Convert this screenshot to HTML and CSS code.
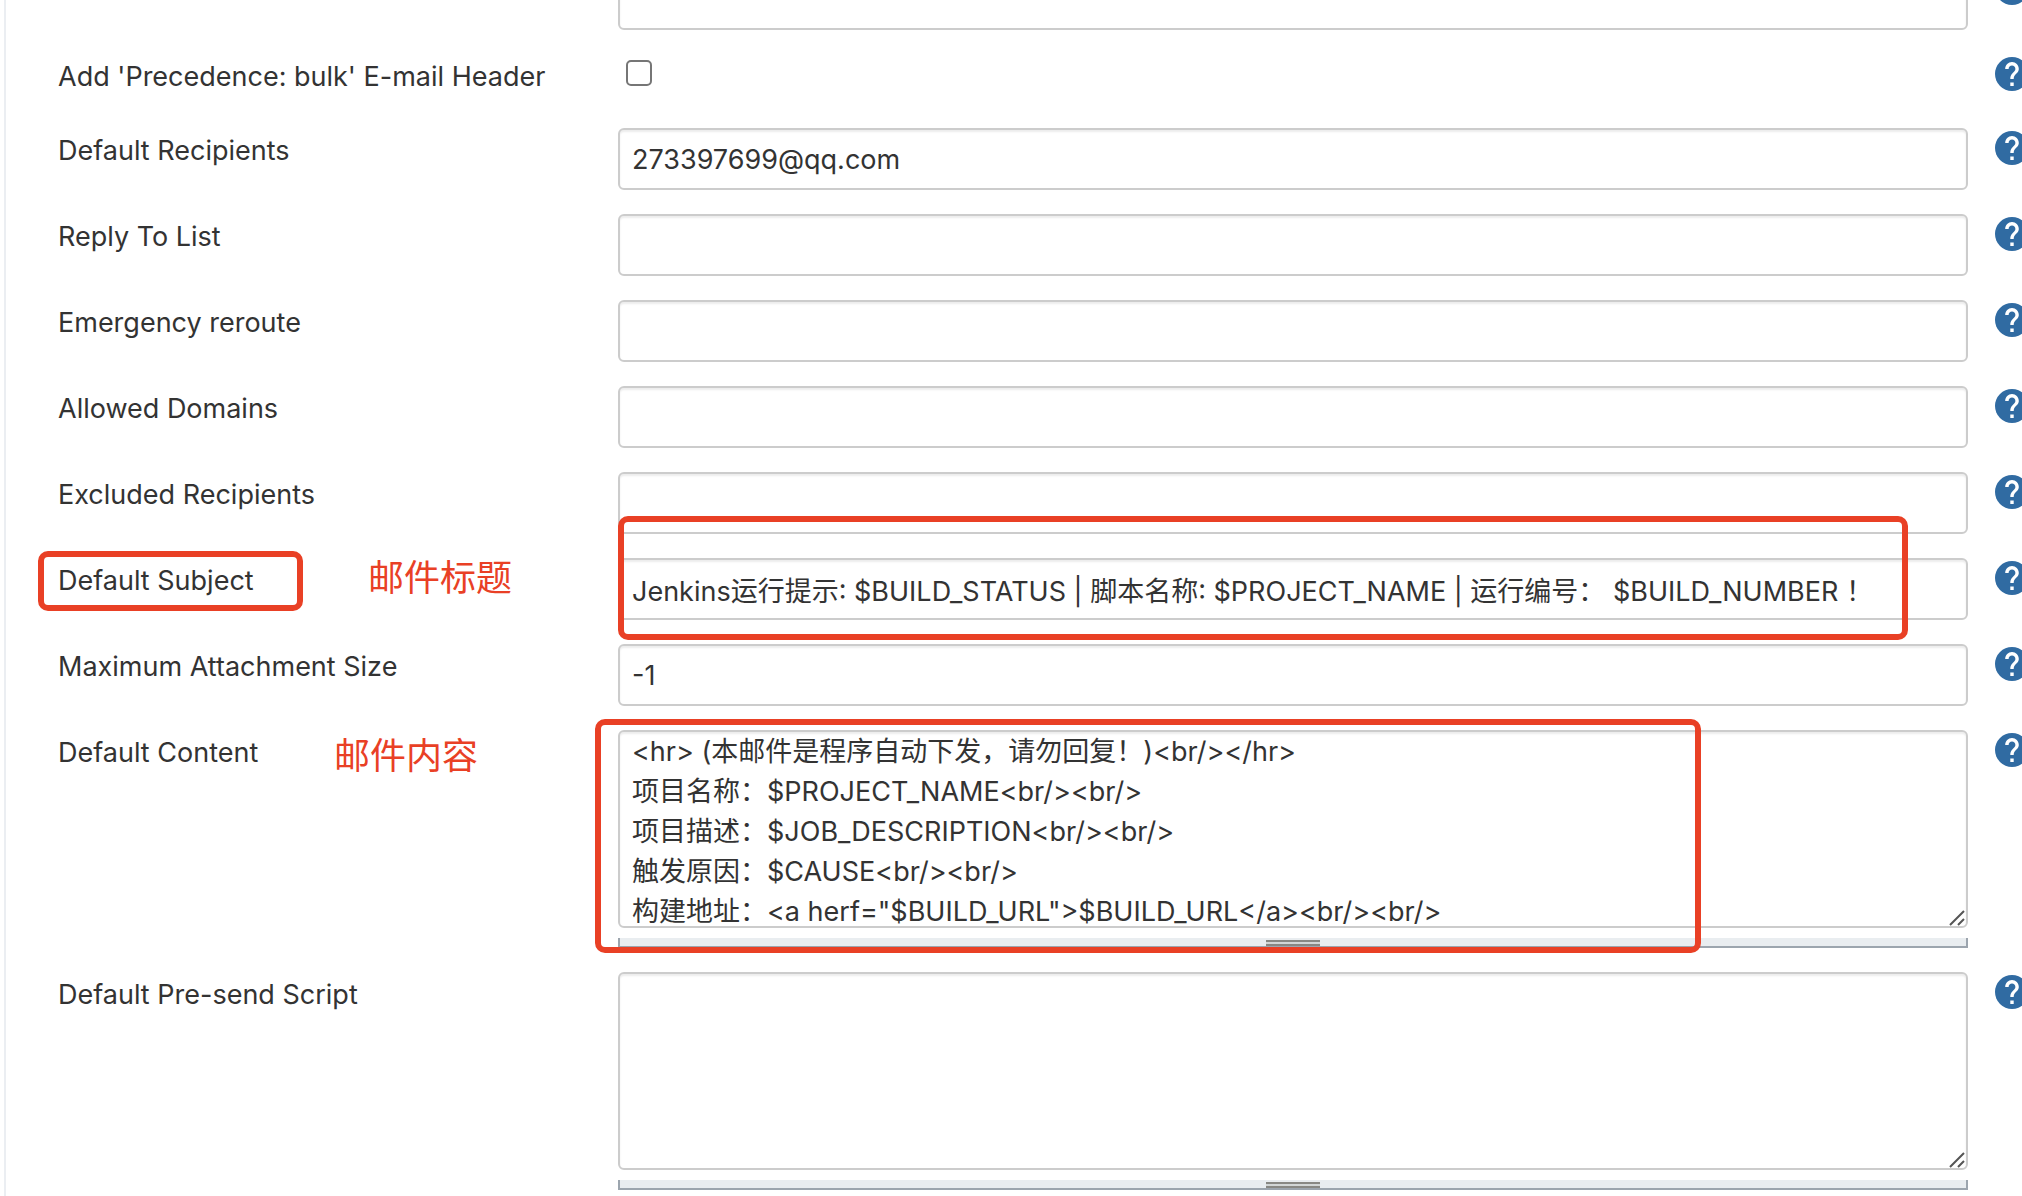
FILE: index.html
```html
<!DOCTYPE html>
<html lang="en">
<head>
<meta charset="utf-8">
<title>Extended E-mail Notification</title>
<link rel="stylesheet" href="styles.css">
</head>
<body>
<svg class="sprite" aria-hidden="true">
  <symbol id="help" viewBox="2 2 20 20"><path fill="#306ba2" d="M12 2a10 10 0 1 0 0 20 10 10 0 0 0 0-20z"/><path fill="#fff" d="M13 19h-2v-2h2v2zm2.070-7.750-.9.920C13.450 12.900 13 13.500 13 15h-2v-.5c0-1.100.45-2.100 1.170-2.830l1.240-1.260c.37-.36.59-.86.59-1.410 0-1.100-.9-2-2-2s-2 .9-2 2H8c0-2.210 1.790-4 4-4s4 1.790 4 4c0 .88-.36 1.680-.93 2.250z"/></symbol>
  <symbol id="grip" viewBox="0 0 16 16"><path d="M1 15 15 1M9 15l6-6" stroke="#555" stroke-width="2" fill="none"/></symbol>
</svg>
<form class="config">
  <div class="row">
    <div class="setting"><input class="text" type="text" aria-label="List ID"></div>
    <button class="help" type="button" aria-label="Help"><svg><use href="#help"/></svg></button>
  </div>
  <div class="row row-check">
    <label class="name" for="bulk">Add 'Precedence: bulk' E-mail Header</label>
    <div class="setting"><input class="check" id="bulk" type="checkbox"></div>
    <button class="help" type="button" aria-label="Help"><svg><use href="#help"/></svg></button>
  </div>
  <div class="row">
    <label class="name" for="recipients">Default Recipients</label>
    <div class="setting"><input class="text" id="recipients" type="text" value="273397699@qq.com"></div>
    <button class="help" type="button" aria-label="Help"><svg><use href="#help"/></svg></button>
  </div>
  <div class="row">
    <label class="name" for="reply">Reply To List</label>
    <div class="setting"><input class="text" id="reply" type="text"></div>
    <button class="help" type="button" aria-label="Help"><svg><use href="#help"/></svg></button>
  </div>
  <div class="row">
    <label class="name" for="reroute">Emergency reroute</label>
    <div class="setting"><input class="text" id="reroute" type="text"></div>
    <button class="help" type="button" aria-label="Help"><svg><use href="#help"/></svg></button>
  </div>
  <div class="row">
    <label class="name" for="domains">Allowed Domains</label>
    <div class="setting"><input class="text" id="domains" type="text"></div>
    <button class="help" type="button" aria-label="Help"><svg><use href="#help"/></svg></button>
  </div>
  <div class="row">
    <label class="name" for="excluded">Excluded Recipients</label>
    <div class="setting"><input class="text" id="excluded" type="text"></div>
    <button class="help" type="button" aria-label="Help"><svg><use href="#help"/></svg></button>
  </div>
  <div class="row">
    <label class="name" for="subject">Default Subject</label>
    <span class="mark mark-label"></span>
    <span class="note note-subject">邮件标题</span>
    <div class="setting">
      <input class="text" id="subject" type="text" value="Jenkins运行提示: $BUILD_STATUS | 脚本名称: $PROJECT_NAME | 运行编号： $BUILD_NUMBER ！">
      <span class="mark mark-subject"></span>
    </div>
    <button class="help" type="button" aria-label="Help"><svg><use href="#help"/></svg></button>
  </div>
  <div class="row">
    <label class="name" for="maxsize">Maximum Attachment Size</label>
    <div class="setting"><input class="text" id="maxsize" type="text" value="-1"></div>
    <button class="help" type="button" aria-label="Help"><svg><use href="#help"/></svg></button>
  </div>
  <div class="row">
    <label class="name" for="content">Default Content</label>
    <span class="note note-content">邮件内容</span>
    <div class="setting">
      <textarea class="text area" id="content">&lt;hr&gt; (本邮件是程序自动下发，请勿回复！)&lt;br/&gt;&lt;/hr&gt;
项目名称：$PROJECT_NAME&lt;br/&gt;&lt;br/&gt;
项目描述：$JOB_DESCRIPTION&lt;br/&gt;&lt;br/&gt;
触发原因：$CAUSE&lt;br/&gt;&lt;br/&gt;
构建地址：&lt;a herf="$BUILD_URL"&gt;$BUILD_URL&lt;/a&gt;&lt;br/&gt;&lt;br/&gt;</textarea>
      <svg class="corner"><use href="#grip"/></svg>
      <div class="handle"><span class="bars"></span></div>
      <span class="mark mark-content"></span>
    </div>
    <button class="help" type="button" aria-label="Help"><svg><use href="#help"/></svg></button>
  </div>
  <div class="row">
    <label class="name" for="presend">Default Pre-send Script</label>
    <div class="setting">
      <textarea class="text area" id="presend"></textarea>
      <svg class="corner"><use href="#grip"/></svg>
      <div class="handle"><span class="bars"></span></div>
    </div>
    <button class="help" type="button" aria-label="Help"><svg><use href="#help"/></svg></button>
  </div>
</form>
</body>
</html>
```
FILE: styles.css
```css
* { box-sizing: border-box; }
body {
  margin: 0;
  overflow: hidden;
  background: #fff;
  color: #333;
  font: 27px/40px Inter, "Noto Sans CJK SC", sans-serif;
}
.sprite { position: absolute; width: 0; height: 0; }
.config {
  display: flex;
  flex-direction: column;
  gap: 24px;
  margin: -32px 0 0 4px;
  padding: 0 0 24px 52px;
  border-left: 2px solid #ebeef2;
}
.row {
  position: relative;
  display: grid;
  grid-template-columns: 560px 1fr 54px;
  align-items: start;
}
.row-check { min-height: 50px; }
.name { grid-column: 1; padding-top: 3px; }
.setting { grid-column: 2; position: relative; }
.text {
  display: block;
  width: 100%;
  height: 62px;
  margin: 0;
  padding: 0 12px;
  border: 2px solid #ccc;
  border-radius: 6px;
  background: #fff;
  box-shadow: inset 0 2px 2px rgba(0, 0, 0, 0.08);
  color: #333;
  font: inherit;
}
.area {
  height: 198px;
  overflow: hidden;
  resize: none;
}
.check {
  appearance: none;
  display: block;
  width: 26px;
  height: 26px;
  margin: 6px 8px;
  border: 2px solid #767676;
  border-radius: 5px;
  background: #fff;
}
.help {
  grid-column: 3;
  width: 34px;
  height: 34px;
  margin: 3px 0 0 27px;
  padding: 0;
  border: 0;
  background: none;
}
.help svg { display: block; width: 34px; height: 34px; }
.corner {
  position: absolute;
  top: 180px;
  right: 3px;
  width: 16px;
  height: 16px;
}
.handle {
  display: flex;
  justify-content: center;
  height: 10px;
  margin-top: 10px;
  border: 2px solid #9ca5ae;
  border-top: 0;
  background: #e9edf0;
}
.bars {
  width: 54px;
  height: 6px;
  margin-top: 2px;
  border: solid #888884;
  border-width: 2px 0;
  background: #d2d6d6;
}
.mark {
  position: absolute;
  border: 6px solid #e94025;
  border-radius: 10px;
  pointer-events: none;
}
.mark-label { top: -7px; left: -20px; width: 265px; height: 60px; }
.mark-subject { top: -42px; left: 0; right: 60px; height: 124px; }
.mark-content { top: -11px; left: -23px; right: 267px; height: 234px; }
.note {
  position: absolute;
  top: 0;
  color: #e94025;
  font-size: 36px;
}
.note-subject { left: 310px; }
.note-content { left: 276px; top: 6px; }
```
